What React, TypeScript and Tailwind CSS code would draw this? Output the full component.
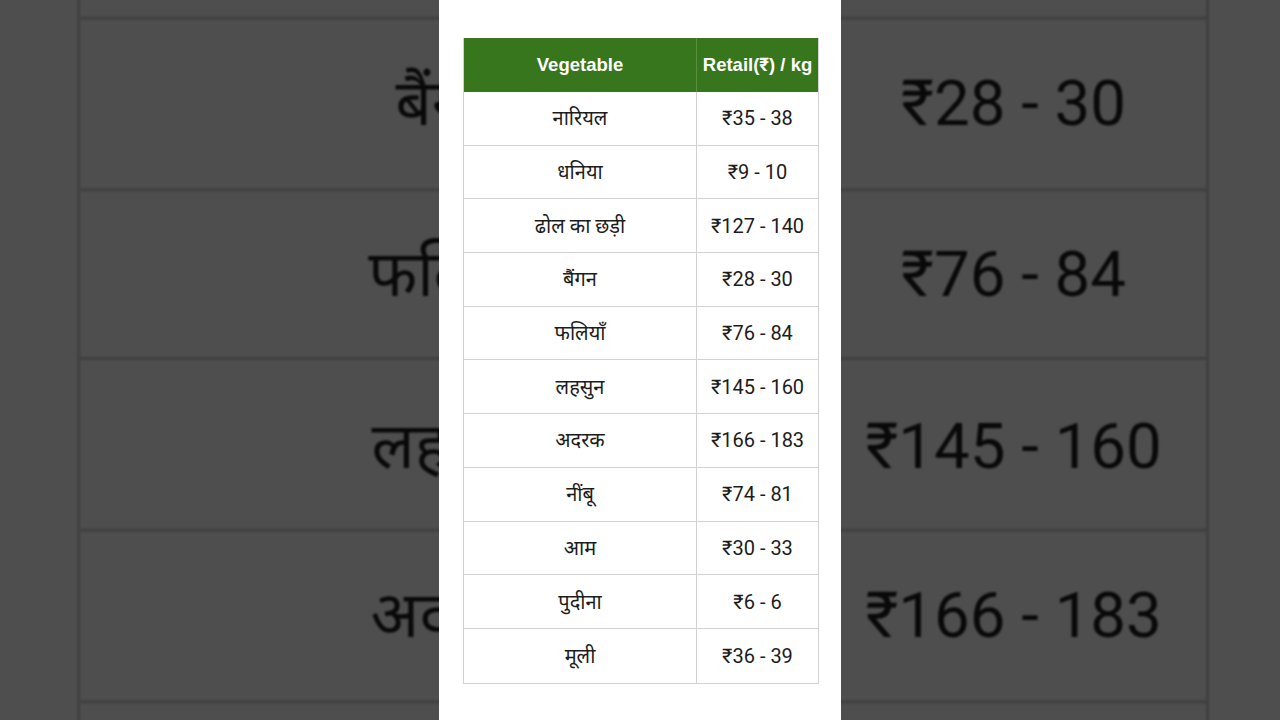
import React from "react";

const rows: [string, string][] = [
  ["नारियल", "₹35 - 38"],
  ["धनिया", "₹9 - 10"],
  ["ढोल का छड़ी", "₹127 - 140"],
  ["बैंगन", "₹28 - 30"],
  ["फलियाँ", "₹76 - 84"],
  ["लहसुन", "₹145 - 160"],
  ["अदरक", "₹166 - 183"],
  ["नींबू", "₹74 - 81"],
  ["आम", "₹30 - 33"],
  ["पुदीना", "₹6 - 6"],
  ["मूली", "₹36 - 39"],
];

function Panel() {
  return (
    <div className="w-[402px] h-[720px] bg-white pt-[38px] pl-[24px] shrink-0">
      <div className="w-[356px] border border-[#d2d2d2] border-t-0">
        <div className="flex h-[54px] bg-[#38761d] text-white font-bold text-[18.5px] font-['Liberation_Sans',Roboto,sans-serif]">
          <div className="w-[233px] flex items-center justify-center border-r border-[#5a8f40]">Vegetable</div>
          <div className="flex-1 flex items-center justify-center">Retail(₹) / kg</div>
        </div>
        {rows.map(([name, price], i) => (
          <div
            key={i}
            className={
              "flex h-[53.7px] text-[20px] text-[#1c1c1c] font-[Roboto,'Noto_Sans',sans-serif] " +
              (i < rows.length - 1 ? "border-b border-[#d2d2d2]" : "")
            }
          >
            <div className="w-[233px] flex items-center justify-center border-r border-[#d2d2d2]">{name}</div>
            <div className="flex-1 flex items-center justify-center">{price}</div>
          </div>
        ))}
      </div>
    </div>
  );
}

export default function App() {
  return (
    <div className="relative w-[1280px] h-[720px] overflow-hidden bg-[#4e4e4e]">
      <div className="absolute inset-0 flex justify-center scale-[3.18] brightness-[0.306] blur-[0.4px]">
        <Panel />
      </div>
      <div className="relative flex justify-center h-[720px]">
        <Panel />
      </div>
    </div>
  );
}
